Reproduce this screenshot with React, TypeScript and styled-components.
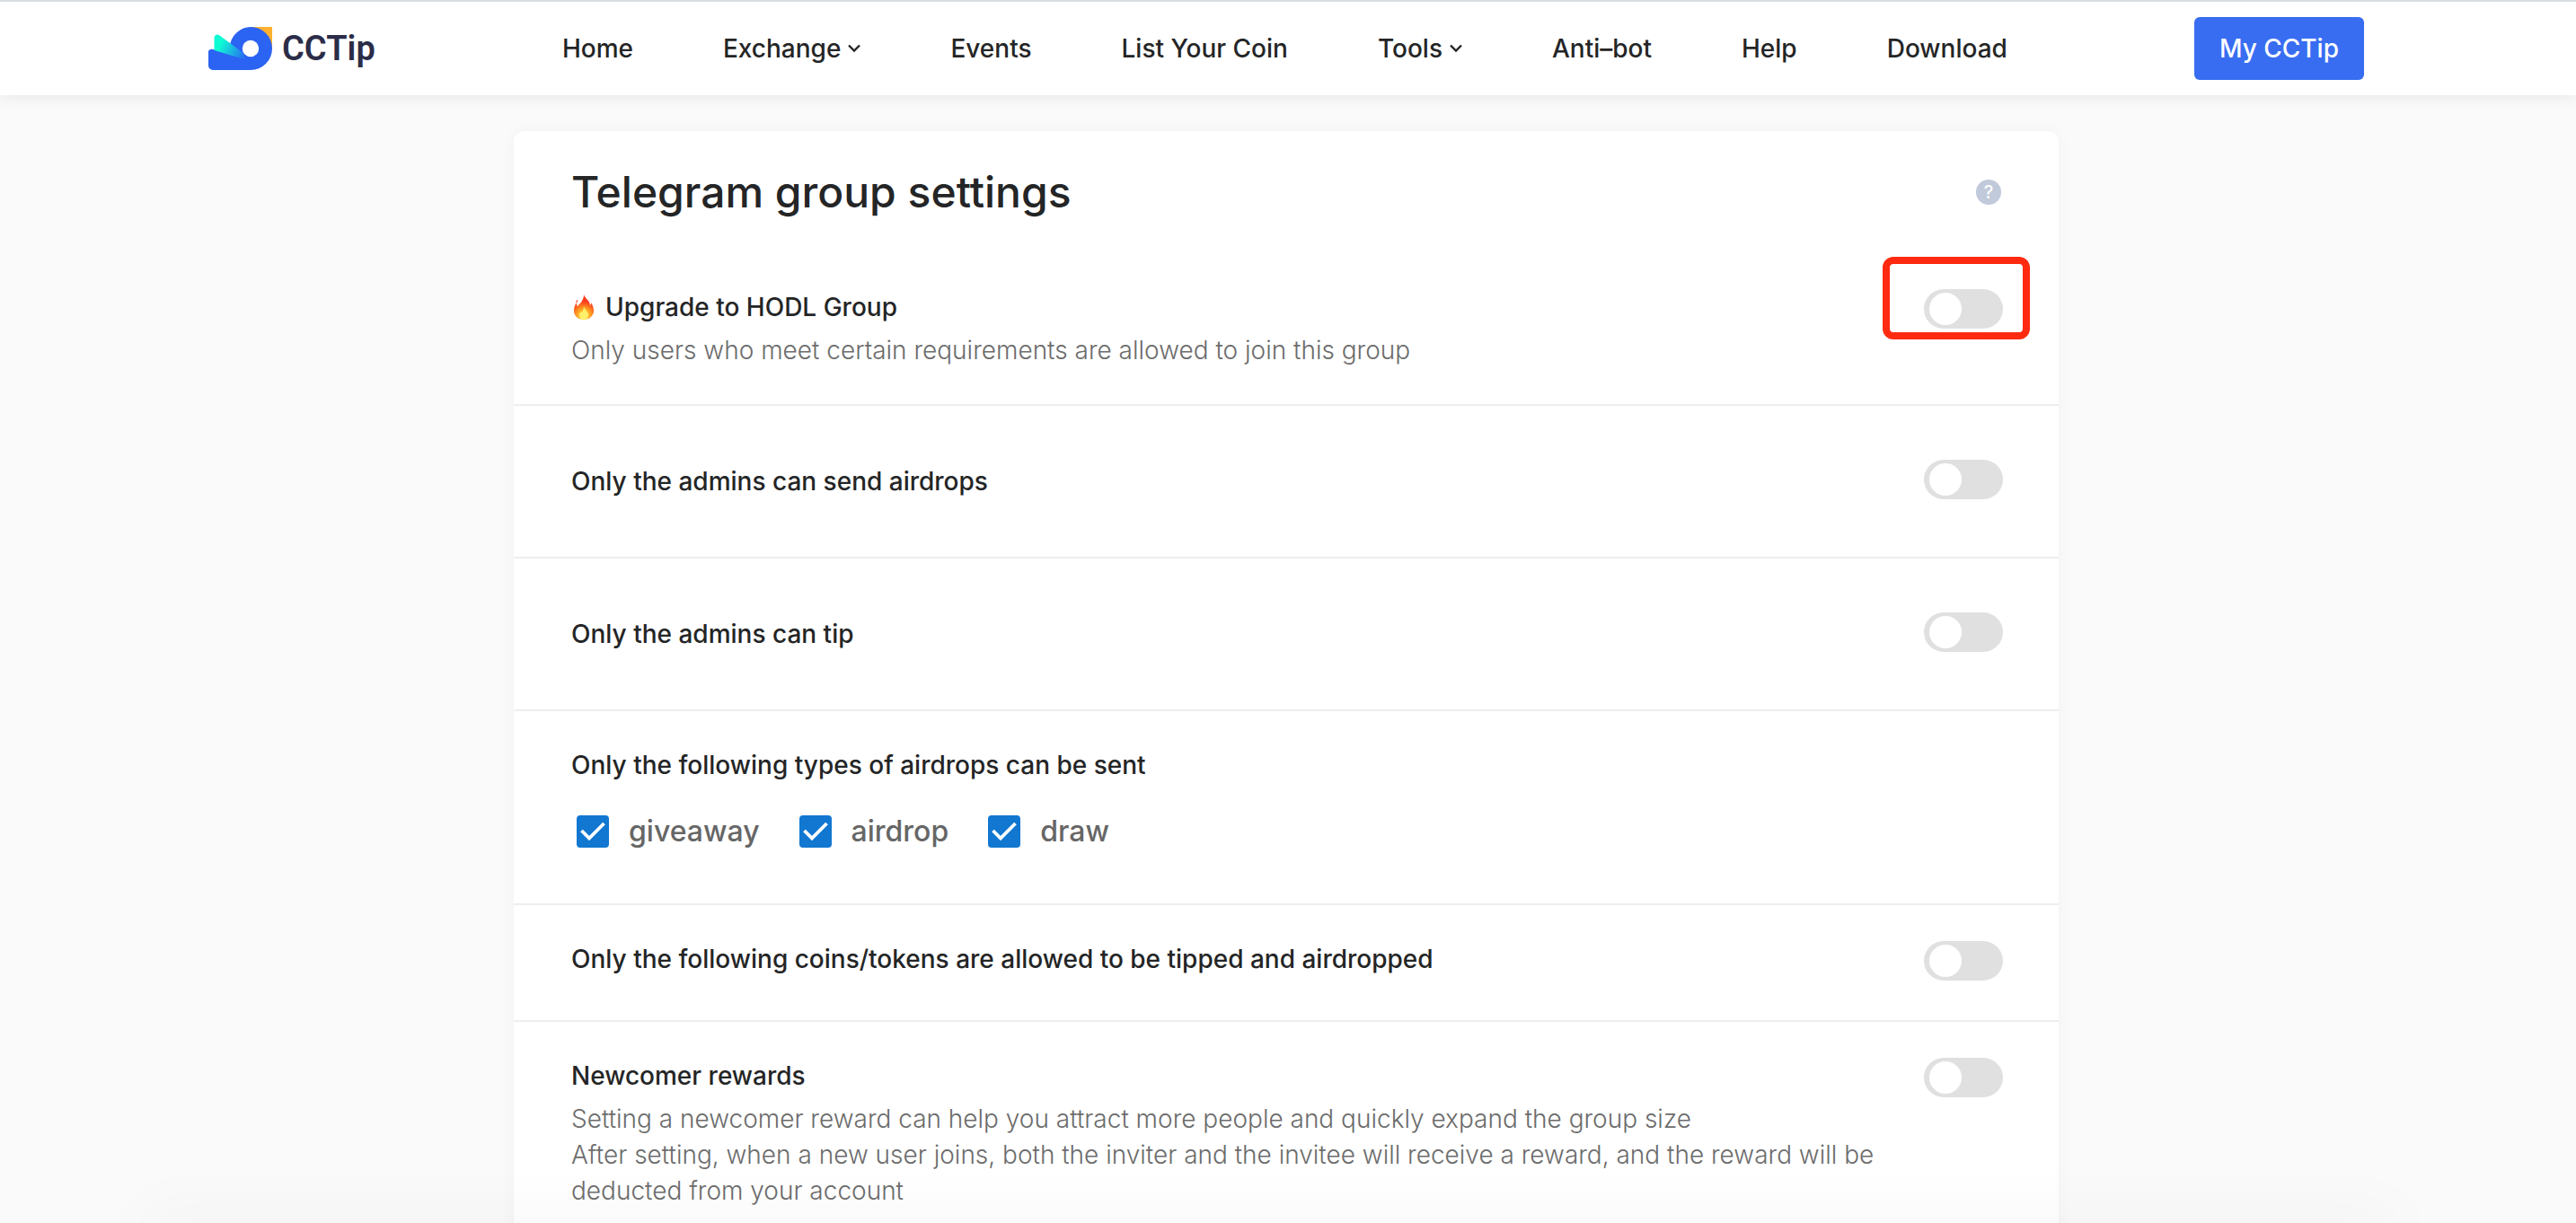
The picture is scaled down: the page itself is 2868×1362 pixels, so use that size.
import React, { useId, useState } from "react";
import styled, { createGlobalStyle } from "styled-components";

const GlobalStyle = createGlobalStyle`
  *, *::before, *::after { box-sizing: border-box; }
  body {
    margin: 0;
    background: #fafafa;
    color: #242526;
    font-family: Inter, "Liberation Sans", sans-serif;
    font-size: 28px;
    line-height: 40px;
  }
`;

const Page = styled.div`
  height: 100vh;
  overflow: hidden;
`;

const Header = styled.header`
  padding-right: 4px;
  border-top: 2px solid #d9dde1;
  background: #fff;
  box-shadow: 0 2px 16px rgba(0, 0, 0, 0.08);
`;

const HeaderInner = styled.div`
  display: flex;
  align-items: center;
  justify-content: space-between;
  max-width: 2400px;
  height: 104px;
  margin: 0 auto;
`;

const Brand = styled.a`
  display: flex;
  align-items: center;
  gap: 10px;
  color: #2b2c48;
  font-family: Roboto, sans-serif;
  font-size: 38px;
  font-weight: 600;
  text-decoration: none;
`;

const Nav = styled.nav`
  display: flex;
  gap: 100px;
`;

const NavLink = styled.a`
  display: flex;
  align-items: center;
  gap: 8px;
  color: #242526;
  font-weight: 500;
  text-decoration: none;
`;

const AccountButton = styled.button`
  height: 70px;
  padding: 0 28px;
  border: 0;
  border-radius: 6px;
  background: #386df2;
  color: #fff;
  font: inherit;
  font-weight: 500;
`;

const Main = styled.main`
  padding: 40px 4px 0 0;
`;

const Card = styled.section`
  max-width: 1720px;
  margin: 0 auto;
  border-radius: 12px;
  background: #fff;
  box-shadow: 0 0 16px rgba(0, 0, 0, 0.04);
`;

const CardHeader = styled.div`
  display: flex;
  align-items: center;
  justify-content: space-between;
  height: 136px;
  padding: 0 64px;
`;

const CardTitle = styled.h1`
  margin: 0;
  font-size: 48px;
  line-height: 64px;
  font-weight: 500;
`;

const HelpButton = styled.button`
  width: 28px;
  height: 28px;
  padding: 0;
  border: 0;
  border-radius: 50%;
  background: #c0cada;
  color: #fff;
  font: inherit;
  font-size: 20px;
  line-height: 28px;
  font-weight: 500;
`;

const Row = styled.div<{ $roomy?: boolean }>`
  display: flex;
  align-items: flex-start;
  justify-content: space-between;
  gap: 24px;
  padding: ${(p) => (p.$roomy ? 60 : 40)}px 62px ${(p) => (p.$roomy ? 60 : 40)}px 64px;
  border-bottom: 2px solid #eee;
`;

const RowText = styled.div<{ $centered?: boolean }>`
  display: flex;
  flex: 1;
  flex-direction: column;
  justify-content: ${(p) => (p.$centered ? "center" : "flex-start")};
  gap: 8px;
  min-height: 48px;
`;

const RowTitle = styled.label`
  display: flex;
  align-items: center;
  gap: 10px;
  font-weight: 500;
`;

const Description = styled.p`
  margin: 0;
  color: #6c6c6c;
  font-weight: 300;
`;

const SwitchSlot = styled.div`
  position: relative;
  display: flex;
`;

const Highlight = styled.div`
  position: absolute;
  inset: -36px -30px -12px -46px;
  border: 8px solid #ff2a10;
  border-radius: 12px;
  pointer-events: none;
`;

const Switch = styled.input`
  width: 88px;
  height: 44px;
  margin: 0;
  padding: 4px 6px;
  border-radius: 22px;
  background: #e0e0e0;
  appearance: none;

  &::before {
    display: block;
    width: 36px;
    height: 36px;
    border-radius: 50%;
    background: #fff;
    content: "";
  }

  &:checked {
    background: #386df2;
  }

  &:checked::before {
    margin-left: auto;
  }
`;

const Choices = styled.fieldset`
  flex: 1;
  min-width: 0;
  margin: 0;
  padding: 0;
  border: 0;
`;

const ChoicesTitle = styled.legend`
  padding: 0 0 14px;
  font-weight: 500;
`;

const ChoiceList = styled.div`
  display: flex;
  align-items: center;
  gap: 44px;
  height: 80px;
  padding-left: 6px;
`;

const Choice = styled.label`
  display: flex;
  align-items: center;
  gap: 22px;
  color: #666;
  font-size: 32px;
  font-weight: 500;
`;

const TickBox = styled.span`
  display: grid;

  > * {
    grid-area: 1 / 1;
  }

  svg {
    pointer-events: none;
  }
`;

const TickInput = styled.input`
  width: 36px;
  height: 36px;
  margin: 0;
  border: 3px solid #1177d1;
  border-radius: 4px;
  appearance: none;

  &:checked {
    background: #1177d1;
  }
`;

const BottomShade = styled.div`
  position: fixed;
  right: 200px;
  bottom: -20px;
  left: 160px;
  height: 20px;
  box-shadow: 0 0 72px rgba(0, 0, 0, 0.08);
  pointer-events: none;
`;

const LogoMark = () => (
  <svg width="72" height="48" viewBox="0 0 72 48" aria-hidden="true">
    <defs>
      <linearGradient id="wing" x1="6" y1="16" x2="42" y2="34" gradientUnits="userSpaceOnUse">
        <stop offset="0.2" stopColor="#0dfbd3" />
        <stop offset="1" stopColor="#2b63f3" />
      </linearGradient>
    </defs>
    <path d="M48 0h23v24z" fill="#ffb02e" />
    <path
      d="M47 0a24 24 0 0 1 0 48H5a5 5 0 0 1-5-5V28a3.500 3.500 0 0 1 4.500-3L24 20A24 24 0 0 1 47 0z"
      fill="#2b63f3"
    />
    <path d="M0 20L6 14V9h7l11 9-1 8L0 25z" fill="#fff" />
    <path d="M0 28a3.500 3.500 0 0 1 4.500-3L43 36v4H0z" fill="#2b63f3" />
    <path d="M24 18.500L38 28.500 43 37 22 31z" fill="#2b63f3" />
    <path d="M6.500 26V12A3.500 3.500 0 0 1 12.500 9.500L38 28.500 43 37z" fill="url(#wing)" />
    <circle cx="47" cy="24" r="9.200" fill="#fff" />
  </svg>
);

const Chevron = () => (
  <svg width="14" height="10" viewBox="0 0 14 10" aria-hidden="true">
    <path d="M1 1.500L7 7.500l6-6" fill="none" stroke="#242526" strokeWidth="2.400" />
  </svg>
);

const Flame = () => (
  <svg width="28" height="32" viewBox="0 0 28 32" aria-hidden="true">
    <defs>
      <radialGradient id="flame" cx="14" cy="25" r="17" gradientUnits="userSpaceOnUse">
        <stop offset="0.15" stopColor="#ffd83d" />
        <stop offset="0.5" stopColor="#ff9420" />
        <stop offset="0.9" stopColor="#fb3b1e" />
      </radialGradient>
    </defs>
    <path
      d="M14 2c1 4 7 7 7 12 1-1 1-2 1-3 2 3 3 6 3 9 0 6-5 10-11 10S3 26 3 20c0-4 1-6 3-9 0 2 0 3 1 4 3-3 7-7 7-13z"
      fill="url(#flame)"
    />
    <path d="M14 15c1 4 5 6 5 10 0 3-2 5-5 5s-5-2-5-5c0-2 1-3 2-4l1 1c1-2 2-4 2-7z" fill="#fff06a" />
    <path d="M7 8c-1 0-2 2-1.500 3C7 11 7.500 9 7 8z" fill="#fb4a2a" />
  </svg>
);

const Tick = () => (
  <svg width="36" height="36" viewBox="0 0 36 36" aria-hidden="true">
    <path d="M5.500 17l8.500 8.500L30.500 9" fill="none" stroke="#fff" strokeWidth="3.800" />
  </svg>
);

const navItems = [
  { label: "Home" },
  { label: "Exchange", menu: true },
  { label: "Events" },
  { label: "List Your Coin" },
  { label: "Tools", menu: true },
  { label: "Anti–bot" },
  { label: "Help" },
  { label: "Download" },
];

type SettingProps = {
  title: string;
  lines?: string[];
  roomy?: boolean;
  icon?: React.ReactNode;
  highlighted?: boolean;
};

const Setting = ({ title, lines, roomy, icon, highlighted }: SettingProps) => {
  const id = useId();
  const [on, setOn] = useState(false);
  return (
    <Row $roomy={roomy}>
      <RowText $centered={roomy}>
        <RowTitle htmlFor={id}>
          {icon}
          {title}
        </RowTitle>
        {lines && (
          <div>
            {lines.map((line) => (
              <Description key={line}>{line}</Description>
            ))}
          </div>
        )}
      </RowText>
      <SwitchSlot>
        <Switch id={id} type="checkbox" role="switch" checked={on} onChange={() => setOn(!on)} />
        {highlighted && <Highlight />}
      </SwitchSlot>
    </Row>
  );
};

const AirdropTypes = () => (
  <Row>
    <Choices>
      <ChoicesTitle>Only the following types of airdrops can be sent</ChoicesTitle>
      <ChoiceList>
        {["giveaway", "airdrop", "draw"].map((name) => (
          <Choice key={name}>
            <TickBox>
              <TickInput type="checkbox" defaultChecked />
              <Tick />
            </TickBox>
            {name}
          </Choice>
        ))}
      </ChoiceList>
    </Choices>
  </Row>
);

export default function App() {
  return (
    <Page>
      <GlobalStyle />
      <Header>
        <HeaderInner>
          <Brand href="#">
            <LogoMark />
            CCTip
          </Brand>
          <Nav>
            {navItems.map((item) => (
              <NavLink key={item.label} href="#">
                {item.label}
                {item.menu && <Chevron />}
              </NavLink>
            ))}
          </Nav>
          <AccountButton type="button">My CCTip</AccountButton>
        </HeaderInner>
      </Header>
      <Main>
        <Card>
          <CardHeader>
            <CardTitle>Telegram group settings</CardTitle>
            <HelpButton type="button">?</HelpButton>
          </CardHeader>
          <Setting
            title="Upgrade to HODL Group"
            icon={<Flame />}
            lines={["Only users who meet certain requirements are allowed to join this group"]}
            highlighted
          />
          <Setting title="Only the admins can send airdrops" roomy />
          <Setting title="Only the admins can tip" roomy />
          <AirdropTypes />
          <Setting title="Only the following coins/tokens are allowed to be tipped and airdropped" />
          <Setting
            title="Newcomer rewards"
            lines={[
              "Setting a newcomer reward can help you attract more people and quickly expand the group size",
              "After setting, when a new user joins, both the inviter and the invitee will receive a reward, and the reward will be deducted from your account",
            ]}
          />
        </Card>
      </Main>
      <BottomShade />
    </Page>
  );
}
